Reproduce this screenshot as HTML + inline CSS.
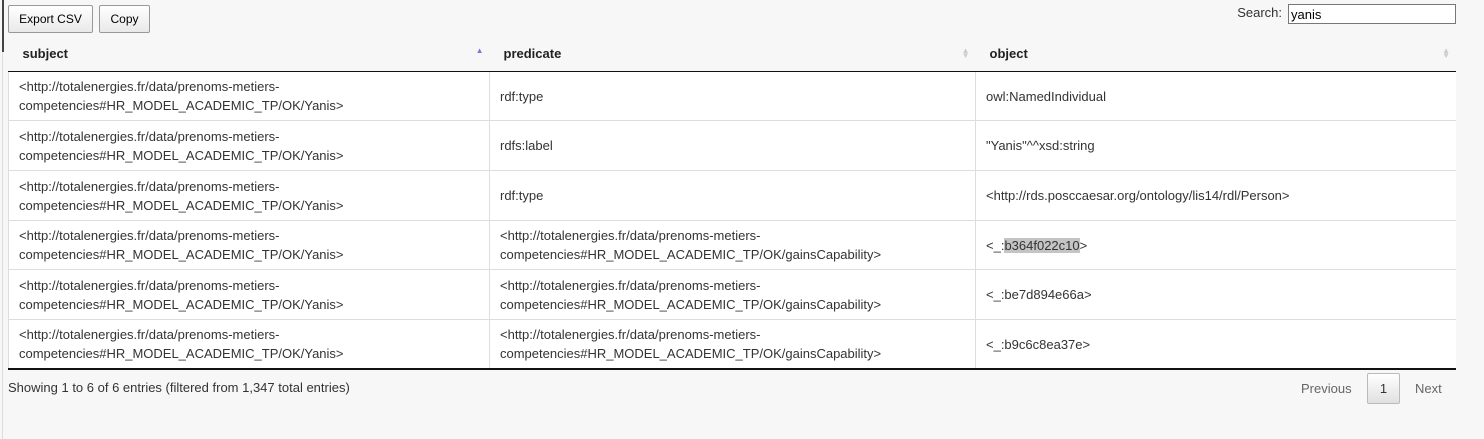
<!DOCTYPE html>
<html><head><meta charset="utf-8"><style>
body{margin:0;width:1484px;height:439px;background:#f7f7f7;font-family:"Liberation Sans",sans-serif;font-size:13px;color:#333;position:relative;overflow:hidden}
.lb{position:absolute;left:2px;top:0;width:2px;height:52px;background:#444}
.lb2{position:absolute;left:2px;top:52px;width:1px;height:387px;background:#ddd}
.btn{position:absolute;top:5px;height:26px;border:1px solid #999;border-radius:2px;background:linear-gradient(#fff,#e9e9e9);font-size:12px;color:#000;line-height:26px;text-align:center}
.search{position:absolute;right:28px;top:4px;font-size:13px}
.search span{margin-right:6px}
.search input{width:162px;height:18px;border:1px solid #777;padding:0 2px;font:13px "Liberation Sans",sans-serif;vertical-align:middle;background:#fff}
table{position:absolute;left:8px;top:35px;width:1448px;border-collapse:collapse}
th{height:36px;text-align:left;font-weight:bold;font-size:13px;color:#222;padding:0 0 0 14px;border-bottom:1px solid #111;position:relative}
th .s{position:absolute;right:6px;top:13px;font-size:8px;color:#ccc;line-height:5px}
td{background:#fff;height:48px;padding:0 0 0 10px;border-top:1px solid #ddd;border-left:1px solid #ddd;line-height:19px;vertical-align:middle}
tr.t td{height:49px}
tr:first-child td{border-top:none}
tbody tr:last-child td{border-bottom:2px solid #111}
mark{background:#c4c4c4;color:#333}
.info{position:absolute;left:8px;top:380px;font-size:13px}
.pg{position:absolute;top:373px;font-size:13px;color:#666}
.cur{position:absolute;left:1367px;top:373px;width:31px;height:29px;border:1px solid #bbb;border-radius:2px;background:linear-gradient(#fff,#e0e0e0);text-align:center;line-height:29px;color:#333}
</style></head><body>
<div class="lb"></div><div class="lb2"></div>
<div class="btn" style="left:8px;width:83px">Export CSV</div>
<div class="btn" style="left:99px;width:49px">Copy</div>
<div class="search"><span>Search:</span><input value="yanis"></div>
<table>
<thead><tr><th style="width:467px">subject<span class="s" style="color:#7a7ad6">▲</span></th><th style="width:472px">predicate<span class="s">▲<br>▼</span></th><th>object<span class="s">▲<br>▼</span></th></tr></thead>
<tbody>
<tr><td>&lt;http://totalenergies.fr/data/prenoms-metiers-<br>competencies#HR_MODEL_ACADEMIC_TP/OK/Yanis&gt;</td><td>rdf:type</td><td>owl:NamedIndividual</td></tr>
<tr class="t"><td>&lt;http://totalenergies.fr/data/prenoms-metiers-<br>competencies#HR_MODEL_ACADEMIC_TP/OK/Yanis&gt;</td><td>rdfs:label</td><td>"Yanis"^^xsd:string</td></tr>
<tr class="t"><td>&lt;http://totalenergies.fr/data/prenoms-metiers-<br>competencies#HR_MODEL_ACADEMIC_TP/OK/Yanis&gt;</td><td>rdf:type</td><td>&lt;http://rds.posccaesar.org/ontology/lis14/rdl/Person&gt;</td></tr>
<tr><td>&lt;http://totalenergies.fr/data/prenoms-metiers-<br>competencies#HR_MODEL_ACADEMIC_TP/OK/Yanis&gt;</td><td>&lt;http://totalenergies.fr/data/prenoms-metiers-<br>competencies#HR_MODEL_ACADEMIC_TP/OK/gainsCapability&gt;</td><td>&lt;_:<mark>b364f022c10</mark>&gt;</td></tr>
<tr class="t"><td>&lt;http://totalenergies.fr/data/prenoms-metiers-<br>competencies#HR_MODEL_ACADEMIC_TP/OK/Yanis&gt;</td><td>&lt;http://totalenergies.fr/data/prenoms-metiers-<br>competencies#HR_MODEL_ACADEMIC_TP/OK/gainsCapability&gt;</td><td>&lt;_:be7d894e66a&gt;</td></tr>
<tr><td>&lt;http://totalenergies.fr/data/prenoms-metiers-<br>competencies#HR_MODEL_ACADEMIC_TP/OK/Yanis&gt;</td><td>&lt;http://totalenergies.fr/data/prenoms-metiers-<br>competencies#HR_MODEL_ACADEMIC_TP/OK/gainsCapability&gt;</td><td>&lt;_:b9c6c8ea37e&gt;</td></tr>
</tbody></table>
<div class="info">Showing 1 to 6 of 6 entries (filtered from 1,347 total entries)</div>
<div class="pg" style="left:1301px;top:381px">Previous</div>
<div class="cur">1</div>
<div class="pg" style="left:1415px;top:381px">Next</div>
</body></html>
